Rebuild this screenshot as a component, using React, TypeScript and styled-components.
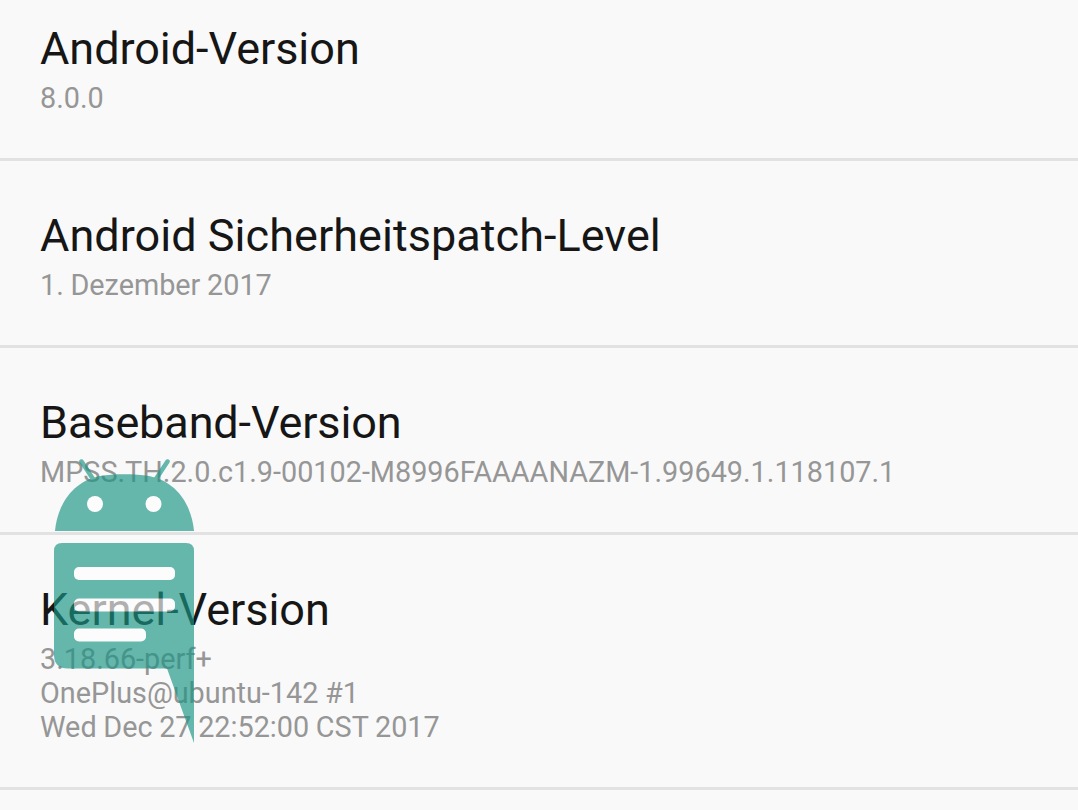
import React from 'react';
import styled, { createGlobalStyle } from 'styled-components';

type InfoEntry = {
    title: string;
    tracking: number;
    lines: string[];
};

const entries: InfoEntry[] = [
    { title: 'Android-Version', tracking: -0.04, lines: ['8.0.0'] },
    { title: 'Android Sicherheitspatch-Level', tracking: 0.04, lines: ['1. Dezember 2017'] },
    { title: 'Baseband-Version', tracking: -0.12, lines: ['MPSS.TH.2.0.c1.9-00102-M8996FAAAANAZM-1.99649.1.118107.1'] },
    { title: 'Kernel-Version', tracking: -0.04, lines: ['3.18.66-perf+', 'OnePlus@ubuntu-142 #1', 'Wed Dec 27 22:52:00 CST 2017'] },
];

const Watermark = () => (
    <WatermarkSvg width={144} height={288} viewBox="52 456 144 288" aria-hidden="true">
        <g opacity={0.66}>
            <g fill="#1a9484">
                <path d="M55 531 C57 508 70 482 100 476 C114 473.500 135 473.500 149 476 C179 482 192 508 194 531 Z" />
                <path d="M62 543 H186 Q194 543 194 551 V743 L167 668.500 H68 Q54 668.500 54 654.500 V551 Q54 543 62 543 Z" />
            </g>
            <g stroke="#1a9484" strokeWidth={4.5} strokeLinecap="round">
                <path d="M81.500 461.500 L93 479" />
                <path d="M167.500 461.500 L156 479" />
            </g>
            <g fill="#fff">
                <circle cx={95} cy={504} r={8} />
                <circle cx={153.5} cy={504} r={8} />
                <rect x={74} y={567} width={101} height={13} rx={5} />
                <rect x={74} y={598.5} width={101} height={13} rx={5} />
                <rect x={74} y={628.5} width={72} height={13} rx={5} />
            </g>
        </g>
    </WatermarkSvg>
);

const App = () => (
    <>
        <GlobalStyle />
        <Screen>
            {entries.map((entry) => (
                <Entry key={entry.title}>
                    <Title $tracking={entry.tracking}>{entry.title}</Title>
                    {entry.lines.map((line) => (
                        <Line key={line}>{line}</Line>
                    ))}
                </Entry>
            ))}
            <Watermark />
        </Screen>
    </>
);

const GlobalStyle = createGlobalStyle`
  body {
    margin: 0;
    background: #f9f9f9;
  }
`;

const Screen = styled.main`
  position: relative;
  box-sizing: border-box;
  height: 810px;
  padding-top: 22px;
  overflow: hidden;
  background: #f9f9f9;
  font-family: Roboto, sans-serif;
`;

const Entry = styled.section`
  box-sizing: border-box;
  padding: 0 40px 43px;
  margin-bottom: 48px;
  border-bottom: 3px solid #e2e2e2;
`;

const Title = styled.h2<{ $tracking: number }>`
  margin: 0 0 6px;
  color: #161616;
  font-size: 45px;
  font-weight: 400;
  line-height: 53px;
  letter-spacing: ${({ $tracking }) => $tracking}px;
  white-space: nowrap;
`;

const Line = styled.p`
  margin: 0;
  color: #969696;
  font-size: 28.8px;
  line-height: 34px;
  word-spacing: -0.5px;
  white-space: nowrap;
`;

const WatermarkSvg = styled.svg`
  position: absolute;
  left: 52px;
  top: 456px;
`;

export default App;
